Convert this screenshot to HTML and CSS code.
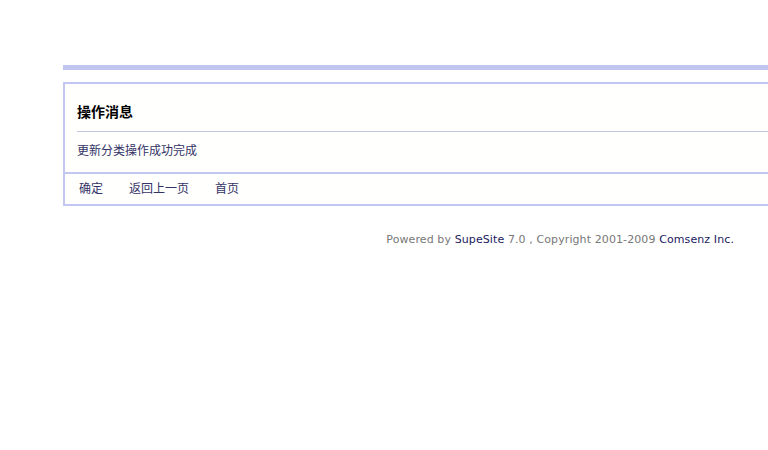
FILE: index.html
```html
<!DOCTYPE html>
<html lang="zh-CN">
<head>
    <meta charset="UTF-8">
    <title>操作消息</title>
    <link rel="stylesheet" href="styles.css">
</head>
<body>
    <div class="page">
        <div class="topbar"></div>

        <!-- message box -->
        <div class="msgbox">
            <div class="msgbody">
                <h2>操作消息</h2>
                <p class="msgtext">更新分类操作成功完成</p>
            </div>
            <div class="msglinks">
                <a href="#">确定</a>
                <a href="#">返回上一页</a>
                <a href="#">首页</a>
            </div>
        </div>

        <div class="footer">
            Powered by <a href="#">SupeSite</a> 7.0 , Copyright 2001-2009 <a href="#">Comsenz Inc.</a>
        </div>
    </div>
</body>
</html>
```

FILE: styles.css
```css
html {
    overflow: hidden;
}
body {
    margin: 0;
    background: #fff;
    font-family: "Noto Sans CJK SC", sans-serif;
    font-size: 12px;
    color: #333366;
}
a {
    color: #333366;
    text-decoration: none;
}
.page {
    margin-left: 63px;
    padding-top: 65px;
    width: 760px;
}
.topbar {
    height: 5px;
    background: #c1c6f0;
}
.msgbox {
    margin-top: 12px;
    border: 2px solid #c4c6f2;
    border-right: none;
    background: #fffffe;
}
.msgbody {
    padding: 0 0 0 12px;
}
.msgbody h2 {
    margin: 0;
    padding: 17px 0 10px;
    font-size: 14px;
    line-height: 20px;
    color: #000;
    border-bottom: 1px solid #c0cadf;
}
.msgtext {
    margin: 0;
    padding: 10px 0 14px;
    line-height: 16px;
}
.msglinks {
    display: flex;
    gap: 22px;
    padding: 5px 12px 7px;
    border-top: 2px solid #c4c6f2;
    line-height: 18px;
}
.msglinks a {
    padding: 0 2px;
}
.footer {
    width: 671px;
    margin-top: 27px;
    text-align: right;
    font-family: "DejaVu Sans", Verdana, sans-serif;
    font-size: 11px;
    line-height: 13px;
    letter-spacing: 0.1px;
    color: #777;
}
.footer a {
    color: #1a1a5e;
}
```
